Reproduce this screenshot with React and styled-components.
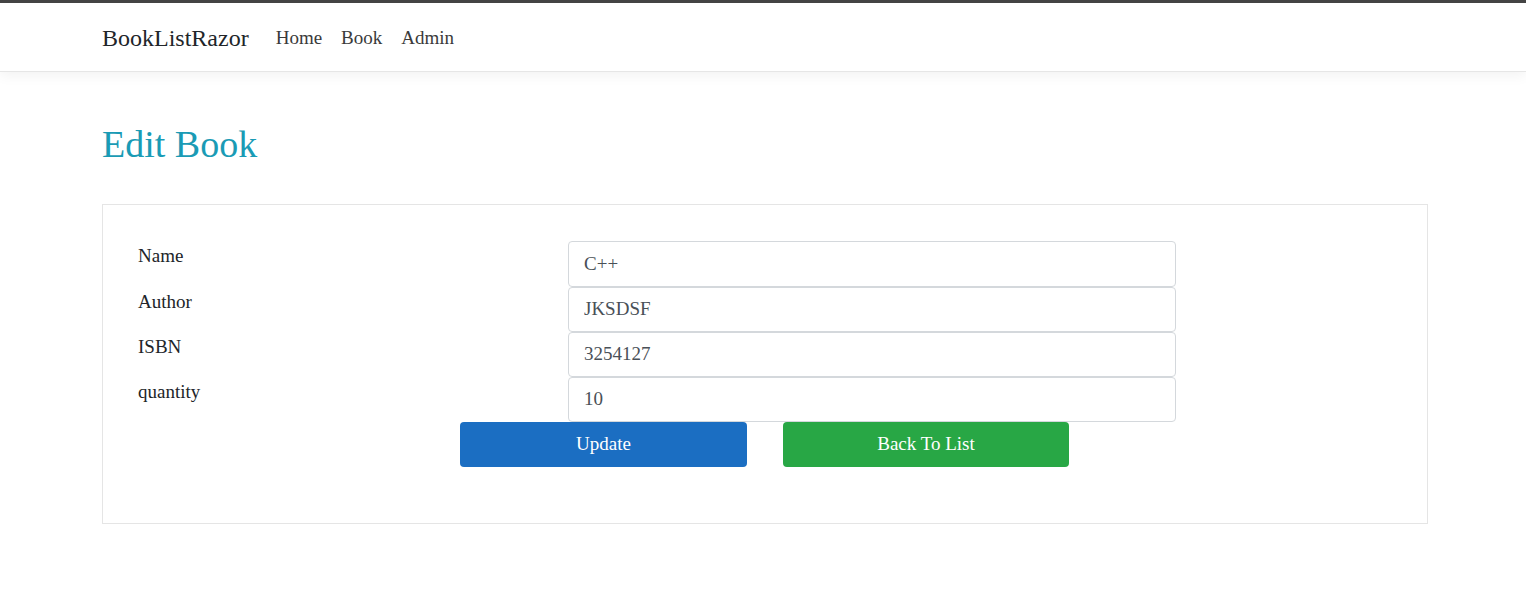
import React from "react";
import styled, { createGlobalStyle } from "styled-components";

const GlobalStyle = createGlobalStyle`
  html, body {
    margin: 0;
    padding: 0;
    background: #fff;
    font-family: "Liberation Serif", "Times New Roman", serif;
    color: #212529;
  }
`;

const TopBar = styled.div`
  height: 3px;
  background: #454545;
`;

const Nav = styled.nav`
  height: 69px;
  box-sizing: border-box;
  display: flex;
  align-items: center;
  padding-left: 102px;
  padding-top: 2px;
  background: #fff;
  border-bottom: 1px solid #e6e6e6;
  box-shadow: 0 4px 12px rgba(0, 0, 0, 0.05);
`;

const Brand = styled.a`
  font-size: 24px;
  color: #212529;
  margin-right: 27px;
`;

const NavLinks = styled.div`
  display: flex;
  gap: 19px;
`;

const NavLink = styled.a`
  font-size: 19px;
  color: #3a3a3a;
`;

const Main = styled.main`
  padding: 50px 98px 0 102px;
`;

const Title = styled.h1`
  margin: 0 0 36px;
  font-size: 38px;
  font-weight: 400;
  color: #1a9bb5;
  line-height: 1.2;
`;

const Card = styled.div`
  border: 1px solid #e5e5e5;
  padding: 36px 0 56px 35px;
`;

const Row = styled.div`
  display: grid;
  grid-template-columns: 430px 608px;
  height: ${(p) => p.h || 45}px;
`;

const Label = styled.label`
  font-size: 19px;
  padding-top: 4px;
`;

const Input = styled.input`
  box-sizing: border-box;
  width: 608px;
  height: ${(p) => p.h || 45}px;
  border: 1px solid #d4d8dc;
  border-radius: 4px;
  padding: 0 15px;
  font-family: "Liberation Serif", "Times New Roman", serif;
  font-size: 19px;
  color: #495057;
  background: #fff;
`;

const Buttons = styled.div`
  display: flex;
  gap: 36px;
  padding-left: 322px;
`;

const Button = styled.button`
  width: ${(p) => p.w}px;
  height: 45px;
  border: none;
  border-radius: 4px;
  background: ${(p) => p.bg};
  color: #fff;
  font-family: "Liberation Serif", "Times New Roman", serif;
  font-size: 19px;
`;

const fields = [
  { label: "Name", value: "C++", h: 46 },
  { label: "Author", value: "JKSDSF", h: 45 },
  { label: "ISBN", value: "3254127", h: 45 },
  { label: "quantity", value: "10", h: 45 },
];

export default function App() {
  return (
    <>
      <GlobalStyle />
      <TopBar />
      <Nav>
        <Brand>BookListRazor</Brand>
        <NavLinks>
          <NavLink>Home</NavLink>
          <NavLink>Book</NavLink>
          <NavLink>Admin</NavLink>
        </NavLinks>
      </Nav>
      <Main>
        <Title>Edit Book</Title>
        <Card>
          {fields.map((f) => (
            <Row key={f.label} h={f.h}>
              <Label>{f.label}</Label>
              <Input h={f.h} defaultValue={f.value} />
            </Row>
          ))}
          <Buttons>
            <Button w={287} bg="#1b6ec2">Update</Button>
            <Button w={286} bg="#28a745">Back To List</Button>
          </Buttons>
        </Card>
      </Main>
    </>
  );
}
